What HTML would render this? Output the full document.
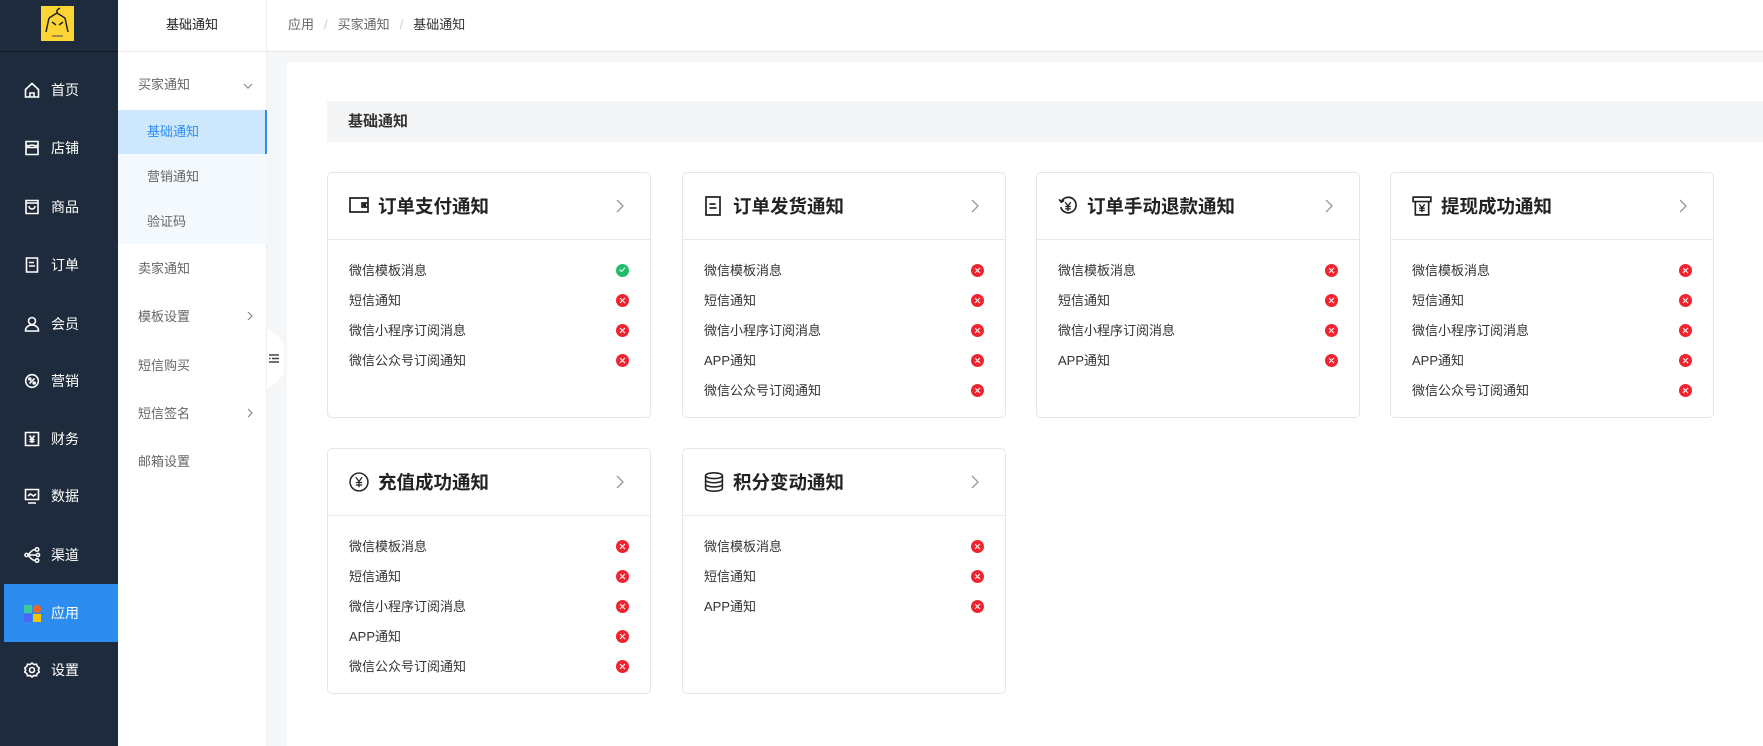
<!DOCTYPE html>
<html><head><meta charset="utf-8"><style>
*{margin:0;padding:0;box-sizing:border-box}
body{width:1763px;height:746px;overflow:hidden;background:#f5f6f8;font-family:"Liberation Sans","Noto Sans CJK SC",sans-serif;position:relative;color:#333}
.side{position:absolute;left:0;top:0;width:118px;height:746px;background:#1e2b3c}
.logo{position:absolute;left:0;top:0;width:118px;height:52px;border-bottom:1px solid #111a25}
.logo div{position:absolute;left:41px;top:6px;width:33px;height:35px;background:#fcd535}
.mi{position:absolute;left:0;width:118px;height:58px;color:#fff;font-size:14px;line-height:58px}
.mi svg{position:absolute;left:24px;top:21px}
.mi span{position:absolute;left:51px;top:0}
.mi.act{left:4px;width:114px;background:#2d8cf0}
.mi.act svg{left:20px}.mi.act span{left:47px}
.sub{position:absolute;left:118px;top:0;width:149px;height:746px;background:#fff;border-right:1px solid #eee}
.subh{height:52px;border-bottom:1px solid #e8e8e8;text-align:center;line-height:50px;font-size:13px;color:#222}
.si{position:absolute;left:0;width:149px;font-size:13px;color:#666;height:44px;line-height:44px;padding-left:20px}
.si.c{padding-left:29px}
.chev{position:absolute;right:14px;top:0;color:#888;font-size:13px}
.top{position:absolute;left:267px;top:0;right:0;height:52px;background:#fff;border-bottom:1px solid #e6e6e6;font-size:13px;line-height:50px;padding-left:21px;color:#666}
.top i{font-style:normal;color:#ccc;margin:0 10px}
.top b{font-weight:normal;color:#333}
.panel{position:absolute;left:287px;top:62px;right:0;bottom:0;background:#fff}
.tbar{position:absolute;left:327px;top:101px;right:0;height:41px;background:#f4f5f7;font-size:15px;font-weight:bold;line-height:41px;padding-left:21px;color:#333}
.card{position:absolute;width:324px;height:246px;border:1px solid #e6e6e6;border-radius:5px;background:#fff}
.ch{height:67px;border-bottom:1px solid #e8e8e8;position:relative}
.ch svg.ic{position:absolute;left:21px;top:23px}
.ch .t{position:absolute;left:50px;top:20px;font-size:18.5px;font-weight:bold;color:#222;line-height:28px}
.ch .ar{position:absolute;left:288px;top:26px}
.row{position:absolute;left:21px;font-size:13px;color:#333;line-height:16px}
.st{position:absolute;left:288px;width:13px;height:13px;border-radius:50%;background:#f0242e}
.st::before,.st::after{content:"";position:absolute;left:6px;top:3px;width:1.4px;height:7px;background:#fff;transform:rotate(45deg)}
.st::after{transform:rotate(-45deg)}
.st.ok{background:#1fbe6a}
.st.ok::before{left:3px;top:6px;width:3px;height:1.4px;transform:rotate(45deg)}
.st.ok::after{left:5px;top:5px;width:5px;height:1.4px;transform:rotate(-50deg)}
.tab{position:absolute;left:267px;top:328px;width:17px;height:61px;background:#fff;clip-path:polygon(0 0,60% 12%,100% 25%,100% 75%,60% 88%,0 100%)}
</style></head><body>
<div class="side">
<div class="logo"><div><svg width="33" height="35" viewBox="0 0 33 35"><path d="M16 4l3-2M16 4v4M8 12l8-5 8 5M8 12l-3 14M24 12l3 14M11 16l4 3M22 16l-4 3" stroke="#222" stroke-width="1.5" fill="none"/><path d="M11 30h11" stroke="#444" stroke-width="1"/></svg></div></div>
<div class="mi" style="top:61px"><svg width="16" height="16" viewBox="0 0 16 16" fill="none" stroke="#fff" stroke-width="1.6"><path d="M1.5 7.5L8 1.5l6.5 6V15h-13z M6 15v-4h4v4"/></svg><span>首页</span></div>
<div class="mi" style="top:119px"><svg width="16" height="16" viewBox="0 0 16 16" fill="none" stroke="#fff" stroke-width="1.6"><path d="M2 1.5h12v6H2zM2 7.5v7h12v-7M2 5c2 2 4 0 6 0s4 2 6 0"/></svg><span>店铺</span></div>
<div class="mi" style="top:178px"><svg width="16" height="16" viewBox="0 0 16 16" fill="none" stroke="#fff" stroke-width="1.6"><path d="M2 1.5h12v13H2zM2 4h12M5 7c0 4 6 4 6 0"/></svg><span>商品</span></div>
<div class="mi" style="top:236px"><svg width="16" height="16" viewBox="0 0 16 16" fill="none" stroke="#fff" stroke-width="1.6"><path d="M2.5 1h11v14h-11zM5 5.5h5M5 9h6"/></svg><span>订单</span></div>
<div class="mi" style="top:295px"><svg width="16" height="16" viewBox="0 0 16 16" fill="none" stroke="#fff" stroke-width="1.6"><circle cx="8" cy="5" r="3.5"/><path d="M1.5 15c0-4 3-6 6.5-6s6.5 2 6.5 6z"/></svg><span>会员</span></div>
<div class="mi" style="top:352px"><svg width="16" height="16" viewBox="0 0 16 16" fill="none" stroke="#fff" stroke-width="1.6"><circle cx="8" cy="8" r="6.3"/><path d="M5.5 10.5l5-5"/><circle cx="5.8" cy="6" r="1"/><circle cx="10.2" cy="10" r="1"/></svg><span>营销</span></div>
<div class="mi" style="top:410px"><svg width="16" height="16" viewBox="0 0 16 16" fill="none" stroke="#fff" stroke-width="1.6"><path d="M1.5 1.5h13v13h-13zM5.5 4.5L8 8l2.5-3.5M8 8v4M5.5 8.5h5M5.5 10.5h5"/></svg><span>财务</span></div>
<div class="mi" style="top:467px"><svg width="16" height="16" viewBox="0 0 16 16" fill="none" stroke="#fff" stroke-width="1.6"><path d="M1.5 1.5h13v10h-13zM4 15h8M4 8l2.5-2 3 2 2.5-2"/></svg><span>数据</span></div>
<div class="mi" style="top:526px"><svg width="17" height="16" viewBox="0 0 17 16" fill="none" stroke="#fff" stroke-width="1.5"><circle cx="2.5" cy="8" r="1.6"/><circle cx="13" cy="2.5" r="1.8"/><circle cx="14" cy="8" r="1.6"/><circle cx="13" cy="13.5" r="1.8"/><path d="M4 8h8.5M4 8c3-4 5-5.5 7-5.5M4 8c3 4 5 5.5 7 5.5"/></svg><span>渠道</span></div>
<div class="mi act" style="top:584px"><svg width="17" height="17" viewBox="0 0 17 17"><rect x="0" y="0" width="8" height="8" fill="#3bc9a0"/><circle cx="13" cy="4" r="4" fill="#f5641e"/><rect x="0" y="9" width="8" height="8" fill="#4c66f5"/><rect x="9" y="9" width="8" height="8" fill="#f7c500"/></svg><span>应用</span></div>
<div class="mi" style="top:641px"><svg width="16" height="16" viewBox="0 0 16 16" fill="none" stroke="#fff" stroke-width="1.6"><path d="M8 1l2 1.5 2.5-.3.8 2.3 2 1.5-1 2 1 2-2 1.5-.8 2.3-2.5-.3L8 15l-2-1.5-2.5.3-.8-2.3-2-1.5 1-2-1-2 2-1.5.8-2.3 2.5.3z"/><circle cx="8" cy="8" r="2.5"/></svg><span>设置</span></div>
</div>
<div class="sub">
<div class="subh">基础通知</div>
<div class="si" style="top:63px">买家通知<span class="chev"><svg width="10" height="6" viewBox="0 0 10 6"><path d="M1 1l4 4 4-4" stroke="#888" fill="none" stroke-width="1.2"/></svg></span></div>
<div style="position:absolute;top:154px;left:0;width:149px;height:90px;background:#f4f9fe"></div>
<div class="si c" style="top:110px;background:#cde8fd;color:#2d8cf0;border-right:2px solid #2d8cf0">基础通知</div>
<div class="si c" style="top:155px">营销通知</div>
<div class="si c" style="top:200px">验证码</div>
<div class="si" style="top:247px">卖家通知</div>
<div class="si" style="top:295px">模板设置<span class="chev"><svg width="6" height="10" viewBox="0 0 6 10"><path d="M1 1l4 4-4 4" stroke="#888" fill="none" stroke-width="1.2"/></svg></span></div>
<div class="si" style="top:344px">短信购买</div>
<div class="si" style="top:392px">短信签名<span class="chev"><svg width="6" height="10" viewBox="0 0 6 10"><path d="M1 1l4 4-4 4" stroke="#888" fill="none" stroke-width="1.2"/></svg></span></div>
<div class="si" style="top:440px">邮箱设置</div>
</div>
<div class="top">应用<i>/</i>买家通知<i>/</i><b>基础通知</b></div>
<div class="panel"></div>
<div class="tab"><svg style="position:absolute;left:2px;top:26px" width="10" height="9" viewBox="0 0 10 9" stroke="#444" stroke-width="1.4"><path d="M0 1h10M3 4.5h7M0 8h10M0 4.5h1.5"/></svg></div>
<div class="tbar">基础通知</div>

<div class="card" style="left:327px;top:172px"><div class="ch"><svg class="ic" width="20" height="18" viewBox="0 0 20 18" fill="none" stroke="#222" stroke-width="1.7"><path d="M1 2h18v14H1zM19 7h-6v4h6"/><circle cx="15.5" cy="9" r=".9"/></svg><div class="t">订单支付通知</div><svg class="ar" width="8" height="14" viewBox="0 0 8 14"><path d="M1 1l6 6-6 6" stroke="#999" fill="none" stroke-width="1.3"/></svg></div>
<div class="row" style="top:90px">微信模板消息</div><div class="st ok" style="top:91px"></div>
<div class="row" style="top:120px">短信通知</div><div class="st" style="top:121px"></div>
<div class="row" style="top:150px">微信小程序订阅消息</div><div class="st" style="top:151px"></div>
<div class="row" style="top:180px">微信公众号订阅通知</div><div class="st" style="top:181px"></div>
</div>

<div class="card" style="left:682px;top:172px"><div class="ch"><svg class="ic" width="18" height="20" viewBox="0 0 18 20" fill="none" stroke="#222" stroke-width="1.7"><path d="M2 1h14v18H2zM5.5 8h6M5.5 12h7"/></svg><div class="t">订单发货通知</div><svg class="ar" width="8" height="14" viewBox="0 0 8 14"><path d="M1 1l6 6-6 6" stroke="#999" fill="none" stroke-width="1.3"/></svg></div>
<div class="row" style="top:90px">微信模板消息</div><div class="st" style="top:91px"></div>
<div class="row" style="top:120px">短信通知</div><div class="st" style="top:121px"></div>
<div class="row" style="top:150px">微信小程序订阅消息</div><div class="st" style="top:151px"></div>
<div class="row" style="top:180px">APP通知</div><div class="st" style="top:181px"></div>
<div class="row" style="top:210px">微信公众号订阅通知</div><div class="st" style="top:211px"></div>
</div>

<div class="card" style="left:1036px;top:172px"><div class="ch"><svg class="ic" width="20" height="20" viewBox="0 0 18 18" fill="none" stroke="#222" stroke-width="1.5"><path d="M3 5A7 7 0 1 1 2.5 10M1 3l2 2.5 2.5-1.5"/><path d="M6.5 5.5L9 9l2.5-3.5M9 9v4.5M6.5 9.5h5M6.5 11.5h5" stroke-width="1.2"/></svg><div class="t">订单手动退款通知</div><svg class="ar" width="8" height="14" viewBox="0 0 8 14"><path d="M1 1l6 6-6 6" stroke="#999" fill="none" stroke-width="1.3"/></svg></div>
<div class="row" style="top:90px">微信模板消息</div><div class="st" style="top:91px"></div>
<div class="row" style="top:120px">短信通知</div><div class="st" style="top:121px"></div>
<div class="row" style="top:150px">微信小程序订阅消息</div><div class="st" style="top:151px"></div>
<div class="row" style="top:180px">APP通知</div><div class="st" style="top:181px"></div>
</div>

<div class="card" style="left:1390px;top:172px"><div class="ch"><svg class="ic" width="20" height="20" viewBox="0 0 18 18" fill="none" stroke="#222" stroke-width="1.5"><path d="M1 1h16v4H1zM3 5v12h12V5"/><path d="M6.5 7.5L9 10.5l2.5-3M9 10.5v4M6.5 11h5M6.5 13h5" stroke-width="1.2"/></svg><div class="t">提现成功通知</div><svg class="ar" width="8" height="14" viewBox="0 0 8 14"><path d="M1 1l6 6-6 6" stroke="#999" fill="none" stroke-width="1.3"/></svg></div>
<div class="row" style="top:90px">微信模板消息</div><div class="st" style="top:91px"></div>
<div class="row" style="top:120px">短信通知</div><div class="st" style="top:121px"></div>
<div class="row" style="top:150px">微信小程序订阅消息</div><div class="st" style="top:151px"></div>
<div class="row" style="top:180px">APP通知</div><div class="st" style="top:181px"></div>
<div class="row" style="top:210px">微信公众号订阅通知</div><div class="st" style="top:211px"></div>
</div>

<div class="card" style="left:327px;top:448px"><div class="ch"><svg class="ic" width="20" height="20" viewBox="0 0 19 19" fill="none" stroke="#222" stroke-width="1.4"><circle cx="9.5" cy="9.5" r="8.5"/><path d="M6.5 5L9.5 9l3-4M9.5 9v5.5M6.5 10h6M6.5 12.3h6" stroke-width="1.2"/></svg><div class="t">充值成功通知</div><svg class="ar" width="8" height="14" viewBox="0 0 8 14"><path d="M1 1l6 6-6 6" stroke="#999" fill="none" stroke-width="1.3"/></svg></div>
<div class="row" style="top:90px">微信模板消息</div><div class="st" style="top:91px"></div>
<div class="row" style="top:120px">短信通知</div><div class="st" style="top:121px"></div>
<div class="row" style="top:150px">微信小程序订阅消息</div><div class="st" style="top:151px"></div>
<div class="row" style="top:180px">APP通知</div><div class="st" style="top:181px"></div>
<div class="row" style="top:210px">微信公众号订阅通知</div><div class="st" style="top:211px"></div>
</div>

<div class="card" style="left:682px;top:448px"><div class="ch"><svg class="ic" width="20" height="20" viewBox="0 0 19 19" fill="none" stroke="#222" stroke-width="1.5"><ellipse cx="9.5" cy="3.5" rx="8" ry="2.7"/><path d="M1.5 3.5v12c0 1.5 3.6 2.7 8 2.7s8-1.2 8-2.7v-12M1.5 7.5c0 1.5 3.6 2.7 8 2.7s8-1.2 8-2.7M1.5 11.5c0 1.5 3.6 2.7 8 2.7s8-1.2 8-2.7"/></svg><div class="t">积分变动通知</div><svg class="ar" width="8" height="14" viewBox="0 0 8 14"><path d="M1 1l6 6-6 6" stroke="#999" fill="none" stroke-width="1.3"/></svg></div>
<div class="row" style="top:90px">微信模板消息</div><div class="st" style="top:91px"></div>
<div class="row" style="top:120px">短信通知</div><div class="st" style="top:121px"></div>
<div class="row" style="top:150px">APP通知</div><div class="st" style="top:151px"></div>
</div>
</body></html>
